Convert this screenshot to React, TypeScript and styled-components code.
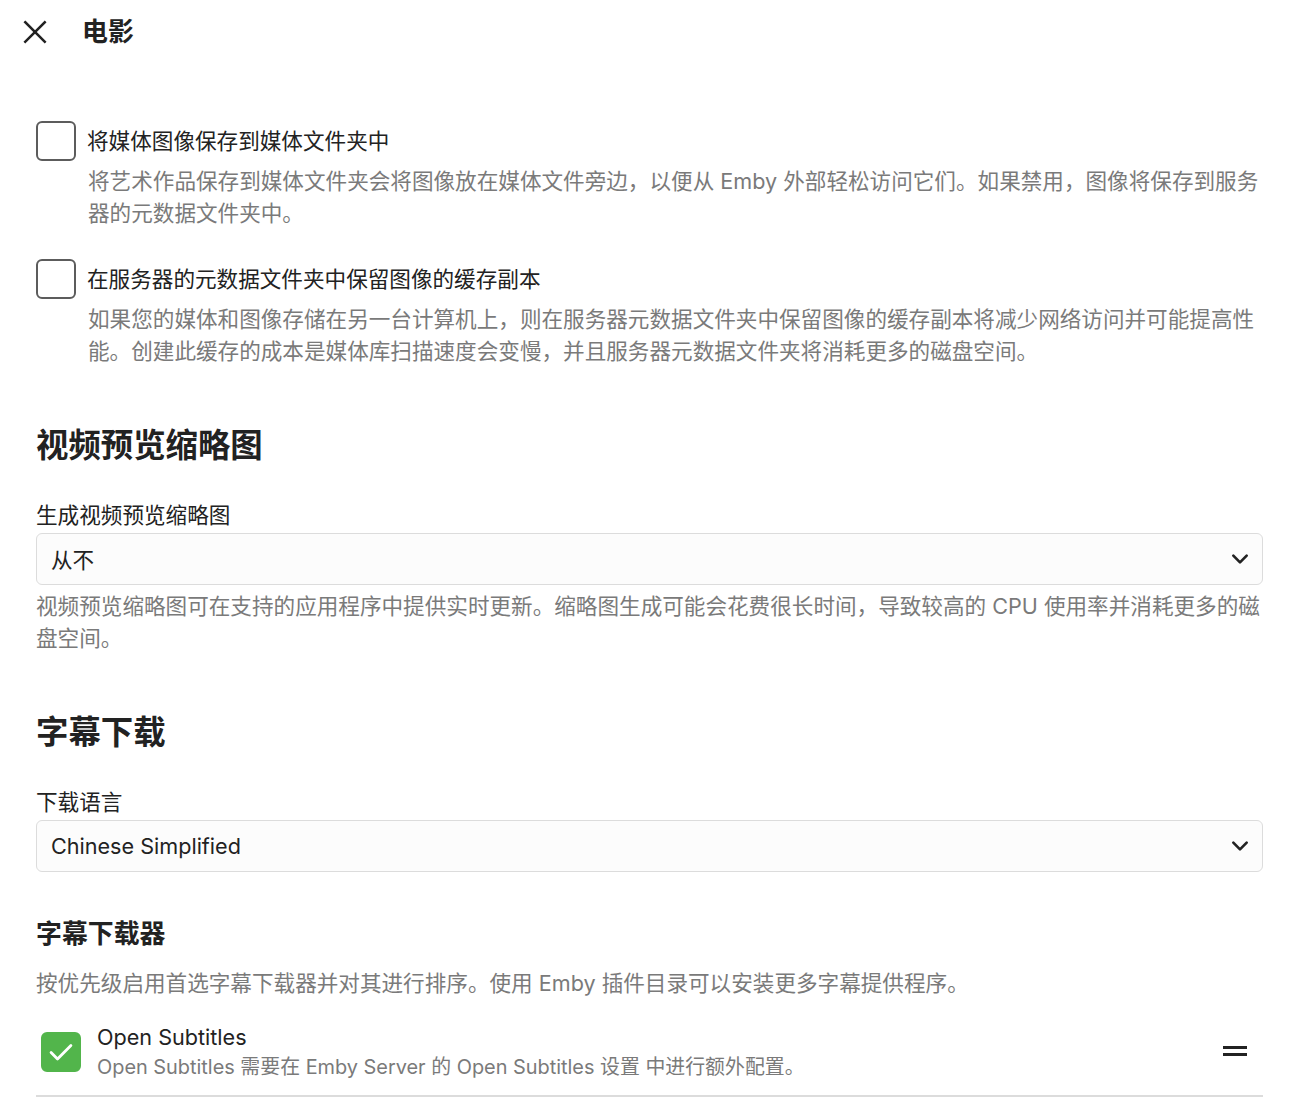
import React, { useState } from "react";
import styled, { createGlobalStyle } from "styled-components";

const GlobalStyle = createGlobalStyle`
  html, body {
    margin: 0;
    padding: 0;
    background: #fff;
  }
  body {
    font-family: Inter, "Noto Sans CJK SC", sans-serif;
    color: #222;
    font-size: 21.6px;
  }
`;

const Page = styled.div`
  display: flex;
  flex-direction: column;
  padding: 0 45px 0 36px;
`;

const Header = styled.header`
  display: flex;
  align-items: center;
  height: 64px;
  margin-left: -24px;
`;

const CloseButton = styled.button`
  width: 46px;
  height: 46px;
  border: none;
  background: transparent;
  display: flex;
  align-items: center;
  justify-content: center;
  padding: 0;
  color: #222;
  cursor: pointer;
`;

const Title = styled.h1`
  margin: 0 0 0 24px;
  font-size: 25.9px;
  font-weight: 700;
  line-height: 1.25;
`;

const Content = styled.div`
  display: flex;
  flex-direction: column;
  padding-top: 57px;
`;

const CheckItem = styled.div`
  display: grid;
  grid-template-columns: 40px 1fr;
  column-gap: 11px;

  & + & {
    margin-top: 29px;
  }
`;

const Box = styled.span<{ checked?: boolean }>`
  box-sizing: border-box;
  flex-shrink: 0;
  width: 40px;
  height: 40px;
  border-radius: 6px;
  border: 2px solid ${({ checked }) => (checked ? "#52b54b" : "#5c5c5c")};
  background: ${({ checked }) => (checked ? "#52b54b" : "transparent")};
  display: flex;
  align-items: center;
  justify-content: center;
  cursor: pointer;
`;

const CheckLabel = styled.span`
  align-self: center;
  font-size: 21.6px;
  line-height: 1.5;
  color: #222;
`;

const Help = styled.div`
  grid-column: 2;
  margin-top: 5px;
  padding-left: 1px;
  font-size: 21.6px;
  line-height: 1.48;
  color: #7a7a7a;
`;

const SectionTitle = styled.h2<{ small?: boolean }>`
  margin: ${({ small }) => (small ? "46px 0 18px" : "58px 0 33px")};
  font-size: ${({ small }) => (small ? "25.9px" : "32.4px")};
  font-weight: 700;
  line-height: 1.25;
  color: #222;
`;

const FieldLabel = styled.label`
  display: block;
  font-size: 21.6px;
  line-height: 1.5;
  margin-bottom: 1px;
`;

const SelectBox = styled.div`
  box-sizing: border-box;
  height: 52px;
  border: 1px solid #dcdcdc;
  border-radius: 6px;
  background: #fcfcfc;
  display: flex;
  align-items: center;
  justify-content: space-between;
  padding: 0 12px 0 14px;
  font-size: 21.6px;
  color: #222;
`;

const Field = styled.div`
  display: flex;
  flex-direction: column;
`;

const Desc = styled.p<{ spaced?: boolean }>`
  margin: ${({ spaced }) => (spaced ? "6px 0 0" : "0")};
  font-size: 21.6px;
  line-height: 1.48;
  color: #7a7a7a;
`;

const ProviderRow = styled.div`
  display: flex;
  align-items: center;
  margin-top: 23px;
  padding: 0 16px 11px 5px;
  border-bottom: 2px solid #dcdcdc;
`;

const ProviderText = styled.div`
  flex: 1;
  display: flex;
  flex-direction: column;
  margin-left: 16px;
`;

const ProviderName = styled.span`
  font-size: 21.6px;
  line-height: 28px;
  color: #222;
`;

const ProviderNote = styled.span`
  font-size: 19.9px;
  line-height: 33px;
  color: #7a7a7a;
`;

const ProviderCheck = styled(Box)`
  margin-top: -3px;
`;

const Handle = styled.span`
  display: flex;
  flex-direction: column;
  gap: 4px;
  margin-top: -4px;
  & > i {
    display: block;
    width: 24px;
    height: 3px;
    background: #222;
  }
`;

const Chevron = () => (
  <svg width="20" height="20" viewBox="0 0 24 24" fill="none" stroke="#222" strokeWidth="3.2" strokeLinecap="round" strokeLinejoin="round">
    <polyline points="4 8 12 16 20 8" />
  </svg>
);

interface CheckboxProps {
  label: string;
  help: string;
}

const Checkbox = ({ label, help }: CheckboxProps) => {
  const [on, setOn] = useState(false);
  return (
    <CheckItem>
      <Box checked={on} onClick={() => setOn(!on)} />
      <CheckLabel>{label}</CheckLabel>
      <Help>{help}</Help>
    </CheckItem>
  );
};

const App = () => {
  return (
    <Page>
      <GlobalStyle />
      <Header>
        <CloseButton aria-label="close">
          <svg width="26" height="26" viewBox="0 0 24 24" fill="none" stroke="#222" strokeWidth="2.3" strokeLinecap="square">
            <line x1="3" y1="3" x2="21" y2="21" />
            <line x1="21" y1="3" x2="3" y2="21" />
          </svg>
        </CloseButton>
        <Title>电影</Title>
      </Header>
      <Content>
        <Checkbox
          label="将媒体图像保存到媒体文件夹中"
          help="将艺术作品保存到媒体文件夹会将图像放在媒体文件旁边，以便从 Emby 外部轻松访问它们。如果禁用，图像将保存到服务器的元数据文件夹中。"
        />
        <Checkbox
          label="在服务器的元数据文件夹中保留图像的缓存副本"
          help="如果您的媒体和图像存储在另一台计算机上，则在服务器元数据文件夹中保留图像的缓存副本将减少网络访问并可能提高性能。创建此缓存的成本是媒体库扫描速度会变慢，并且服务器元数据文件夹将消耗更多的磁盘空间。"
        />

        <SectionTitle>视频预览缩略图</SectionTitle>
        <Field>
          <FieldLabel>生成视频预览缩略图</FieldLabel>
          <SelectBox>
            <span>从不</span>
            <Chevron />
          </SelectBox>
          <Desc spaced>
            视频预览缩略图可在支持的应用程序中提供实时更新。缩略图生成可能会花费很长时间，导致较高的 CPU 使用率并消耗更多的磁盘空间。
          </Desc>
        </Field>

        <SectionTitle>字幕下载</SectionTitle>
        <Field>
          <FieldLabel>下载语言</FieldLabel>
          <SelectBox>
            <span>Chinese Simplified</span>
            <Chevron />
          </SelectBox>
        </Field>

        <SectionTitle small>字幕下载器</SectionTitle>
        <Desc>按优先级启用首选字幕下载器并对其进行排序。使用 Emby 插件目录可以安装更多字幕提供程序。</Desc>
        <ProviderRow>
          <ProviderCheck checked>
            <svg width="28" height="28" viewBox="0 0 24 24" fill="none" stroke="#fff" strokeWidth="2.4" strokeLinecap="round" strokeLinejoin="round">
              <polyline points="3.5 12.5 9 18 20.5 6.5" />
            </svg>
          </ProviderCheck>
          <ProviderText>
            <ProviderName>Open Subtitles</ProviderName>
            <ProviderNote>Open Subtitles 需要在 Emby Server 的 Open Subtitles 设置 中进行额外配置。</ProviderNote>
          </ProviderText>
          <Handle>
            <i />
            <i />
          </Handle>
        </ProviderRow>
      </Content>
    </Page>
  );
};

export default App;
